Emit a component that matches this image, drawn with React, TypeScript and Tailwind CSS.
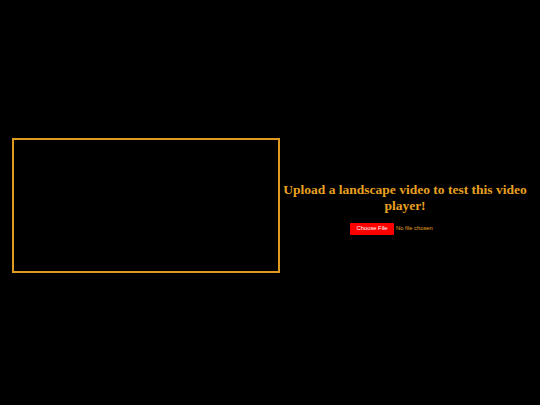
export default function App() {
  return (
    <div className="w-[540px] h-[405px] bg-black flex items-center pt-[6px]" style={{ fontFamily: '"Liberation Serif", serif' }}>
      <div className="ml-3 w-[268px] h-[135px] border-2 border-[#e09a22] shrink-0" />
      <div className="flex-1 flex flex-col items-center pl-[2px] pr-3 pt-[5px]">
        <h1 className="text-[13.5px] leading-[16px] font-bold text-[#e8a020] text-center">
          Upload a landscape video to test this video player!
        </h1>
        <div className="mt-[9px] w-[110px] flex items-center gap-[2px] text-[5.8px] text-[#e8a020]" style={{ fontFamily: '"Liberation Sans", sans-serif' }}>
          <span className="bg-[#ff0000] text-white w-[44px] shrink-0 justify-center h-[12px] flex items-center rounded-[1px]">Choose File</span>
          <span>No file chosen</span>
        </div>
      </div>
    </div>
  );
}
